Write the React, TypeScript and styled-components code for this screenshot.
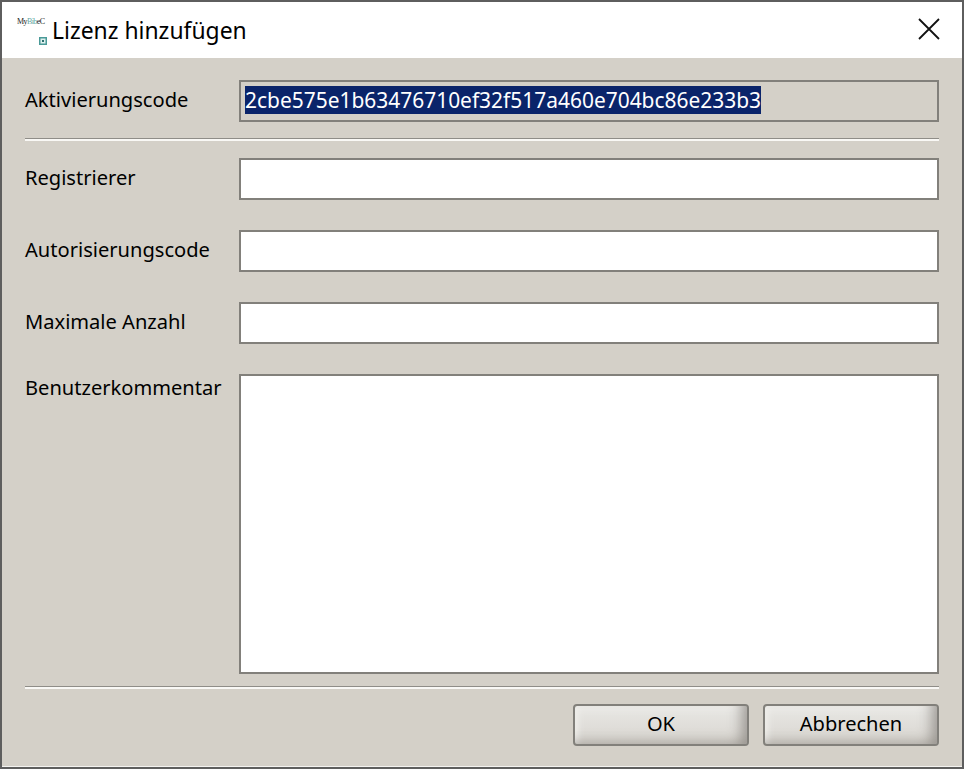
import React from "react";
import styled, { createGlobalStyle } from "styled-components";

const Global = createGlobalStyle`
  html, body { margin: 0; padding: 0; background: #fff; }
  #root { width: 964px; height: 769px; }
`;

const FONT = `"Noto Sans", "Open Sans", "Liberation Sans", sans-serif`;

const Dialog = styled.div`
  box-sizing: border-box;
  width: 964px;
  height: 769px;
  display: flex;
  flex-direction: column;
  border: 2px solid #5e5e5e;
  background: #d4d0c8;
  font-family: ${FONT};
  color: #000;
  box-shadow: inset 0 -1px 0 #f4f3f0;
`;

const TitleBar = styled.div`
  flex: 0 0 56px;
  display: flex;
  align-items: center;
  background: #fff;
  padding-left: 15px;
  padding-right: 21px;
`;

const AppIcon = styled.svg`
  flex: none;
  width: 32px;
  height: 32px;
  margin-right: 3px;
  margin-top: 2px;
`;

const Title = styled.h1`
  flex: 1;
  margin: 2px 0 0;
  font-size: 22.9px;
  font-weight: 400;
  line-height: 30px;
`;

const CloseIcon = styled.svg`
  flex: none;
  width: 24px;
  height: 24px;
  margin-top: -2px;
`;

const Content = styled.div`
  flex: 1;
  display: flex;
  flex-direction: column;
  padding: 22px 23px 20px 23px;
`;

const ActivationRow = styled.div`
  display: grid;
  grid-template-columns: 214px 700px;
  align-items: center;
`;

const Rule = styled.hr<{ $top: number; $bottom: number }>`
  flex: none;
  width: 100%;
  margin: ${(p) => p.$top}px 0 ${(p) => p.$bottom}px;
  border: 0;
  height: 3px;
  background: linear-gradient(#8f8d88 0 1px, #f9f8f5 1px 3px);
`;

const Form = styled.div`
  display: grid;
  grid-template-columns: 214px 700px;
  row-gap: 30px;
`;

const Label = styled.label<{ $offset: number; $lift?: number }>`
  font-size: 20.1px;
  line-height: 28px;
  padding-top: ${(p) => p.$offset}px;
  margin-bottom: ${(p) => p.$lift ?? 0}px;
  white-space: nowrap;
`;

const ReadOnlyField = styled.div`
  box-sizing: border-box;
  height: 42px;
  display: flex;
  align-items: center;
  padding: 0 0 2px 4px;
  border: 2px solid #82807b;
  background: #d4d0c8;
  font-size: 20.95px;
`;

const Selected = styled.span`
  background: #0a246a;
  color: #fff;
  line-height: 28px;
  white-space: nowrap;
`;

const TextInput = styled.input`
  box-sizing: border-box;
  display: block;
  width: 700px;
  height: 42px;
  padding: 0 4px;
  border: 2px solid #82807b;
  border-radius: 0;
  outline: none;
  background: #fff;
  font: 400 20px ${FONT};
`;

const TextArea = styled.textarea`
  box-sizing: border-box;
  display: block;
  width: 700px;
  height: 300px;
  padding: 4px;
  border: 2px solid #82807b;
  border-radius: 0;
  outline: none;
  resize: none;
  background: #fff;
  font: 400 20px ${FONT};
`;

const Footer = styled.div`
  display: flex;
  justify-content: flex-end;
  gap: 14px;
`;

const Button = styled.button`
  box-sizing: border-box;
  width: 176px;
  height: 42px;
  padding: 0 0 4px;
  border: 2px solid #82807b;
  border-radius: 4px;
  background: linear-gradient(#e8e7e4, #d9d6d0);
  box-shadow:
    inset -10px -5px 14px -5px rgba(105, 100, 95, 0.6),
    inset 3px 3px 6px #f0efec;
  color: #000;
  font: 400 20.1px ${FONT};
`;

export default function App() {
  return (
    <>
      <Global />
      <Dialog>
        <TitleBar>
          <AppIcon viewBox="0 0 32 32" aria-hidden="true">
            <text x="0" y="9" fontFamily="'Liberation Serif', serif" fontSize="8" textLength="28" fill="#222">
              My<tspan fill="#5fa7a5">Bib</tspan>eC
            </text>
            <rect x="22.75" y="22.75" width="6.5" height="6.5" fill="#dff0ee" stroke="#4a9a98" strokeWidth="1.5" />
            <rect x="25" y="25" width="2" height="2" fill="#2b6f6e" />
          </AppIcon>
          <Title>Lizenz hinzufügen</Title>
          <CloseIcon viewBox="0 0 24 24" aria-hidden="true">
            <path d="M2 2 L22 22 M22 2 L2 22" stroke="#111" strokeWidth="1.8" fill="none" />
          </CloseIcon>
        </TitleBar>
        <Content>
          <ActivationRow>
            <Label $offset={0} $lift={2}>Aktivierungscode</Label>
            <ReadOnlyField>
              <Selected>2cbe575e1b63476710ef32f517a460e704bc86e233b3</Selected>
            </ReadOnlyField>
          </ActivationRow>
          <Rule $top={16} $bottom={17} />
          <Form>
            <Label $offset={6}>Registrierer</Label>
            <TextInput />
            <Label $offset={6}>Autorisierungscode</Label>
            <TextInput />
            <Label $offset={6}>Maximale Anzahl</Label>
            <TextInput />
            <Label $offset={0}>Benutzerkommentar</Label>
            <TextArea />
          </Form>
          <Rule $top={12} $bottom={15} />
          <Footer>
            <Button>OK</Button>
            <Button>Abbrechen</Button>
          </Footer>
        </Content>
      </Dialog>
    </>
  );
}
